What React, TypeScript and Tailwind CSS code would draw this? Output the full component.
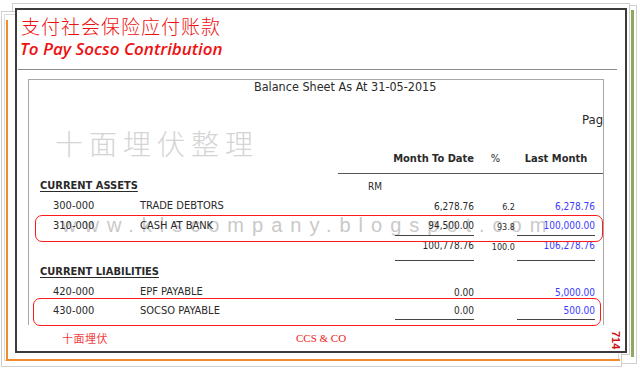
export default function App() {
  const rep = "font-['DejaVu_Sans_Condensed','DejaVu_Sans',sans-serif] text-[#2a2a2a]";
  const blue = "text-[#3b3bff]";
  const num = "flex items-center justify-end text-[10px]";
  const pct = "flex items-center justify-end pr-[2px] pt-[3px] text-[9px]";
  return (
    <div className="relative h-[368px] w-[640px] overflow-hidden bg-white">
      {/* stacked paper sheets behind the main sheet */}
      <div className="absolute left-[20px] top-[5px] h-[359px] w-[617px] border border-[#cfcfcf] bg-white" />
      <div className="absolute left-[631px] top-[10px] h-[347px] w-[3px] bg-[#8fa860]" />
      <div className="absolute left-[12px] top-[3px] h-[352px] w-[618px] border border-[#cfcfcf] bg-white" />
      <div className="absolute left-[1px] top-[11px] h-[356px] w-[621px] border border-[#cfcfcf] bg-white" />
      <div className="absolute left-[4px] top-[14px] h-[347px] w-[615px] border border-[#dadada] bg-white" />
      <div className="absolute left-[6px] top-[20px] h-[341px] w-[614px] border-b-2 border-l-2 border-[#f28c28]" />

      {/* main sheet */}
      <div className="relative ml-[15px] mt-[8px] flex h-[345px] w-[612px] flex-col border-2 border-[#3b3b3b] bg-white">
        <div className="ml-[4px] mt-[4px] h-[24px] font-['Noto_Sans_CJK_SC',sans-serif] text-[19px] font-light leading-[24px] tracking-[1px] text-[#ee1111]">
          支付社会保险应付账款
        </div>
        <div className="ml-[3px] h-[22px] font-['Open_Sans',sans-serif] text-[17px] font-semibold italic leading-[22px] text-[#ee1111]">
          To Pay Socso Contribution
        </div>
        <div className="ml-[1px] mt-[9px] h-px w-[599px] bg-[#8c8c8c]" />

        {/* report box */}
        <div className={`relative z-0 ml-[11px] mt-[9px] flex h-[246px] w-[576px] flex-col border-l border-r border-t border-[#a8a8a8] ${rep}`}>
          <div className="absolute left-[26px] top-[49px] -z-10 font-['Noto_Sans_CJK_SC',sans-serif] text-[28px] font-light leading-[28px] tracking-[6px] text-[#d4d4d4]">
            十面埋伏整理
          </div>
          <div className="absolute left-[33px] top-[133px] -z-10 whitespace-nowrap font-['Liberation_Sans',sans-serif] text-[20px] leading-[24px] tracking-[8px] text-[#c9c9c9]">
            www.klscompany.blogspot.com
          </div>

          <div className="-mt-[2px] h-[18px] pl-[225px] text-[12.5px] leading-[18px]">
            Balance Sheet As At 31-05-2015
          </div>
          <div className="mt-[15px] h-[18px] overflow-hidden whitespace-nowrap pl-[553px] text-[13px] leading-[18px]">
            Page 1
          </div>

          {/* column headers */}
          <div className="ml-[309px] mt-[20px] flex h-[25px] w-[265px] items-start border-b border-[#555555] text-[11px] font-bold">
            <div className="flex h-[20px] w-[136px] items-center justify-end">Month To Date</div>
            <div className="flex h-[20px] w-[43px] items-center justify-center font-normal">%</div>
            <div className="flex h-[20px] w-[78px] items-center justify-center">Last Month</div>
          </div>

          {/* CURRENT ASSETS */}
          <div className="mt-[2px] flex h-[20px] items-center">
            <div className="w-[339px] pl-[11px] text-[11px] font-bold underline underline-offset-2">CURRENT ASSETS</div>
            <div className="text-[10px]">RM</div>
          </div>

          <div className="mt-[1px] flex h-[19px] items-stretch pl-[24px] text-[11px]">
            <div className="flex w-[87px] items-center">300-000</div>
            <div className="flex w-[255px] items-center">TRADE DEBTORS</div>
            <div className={`w-[79px] ${num}`}>6,278.76</div>
            <div className={`w-[43px] ${pct}`}>6.2</div>
            <div className={`w-[78px] ${num} ${blue}`}>6,278.76</div>
          </div>

          <div className="relative flex h-[20px] items-stretch pl-[24px] text-[11px]">
            <div className="absolute left-[6px] top-[-1px] h-[27px] w-[568px] rounded-[7px] border-[1.5px] border-[#ff1a1a]" />
            <div className="flex w-[87px] items-center">310-000</div>
            <div className="flex w-[255px] items-center">CASH AT BANK</div>
            <div className={`w-[79px] border-b border-[#444444] ${num}`}>94,500.00</div>
            <div className={`w-[43px] ${pct}`}>93.8</div>
            <div className={`w-[78px] border-b border-[#444444] ${num} ${blue}`}>100,000.00</div>
          </div>

          <div className="flex h-[25px] items-stretch pl-[366px] text-[11px]">
            <div className={`w-[79px] border-b border-[#444444] pb-[5px] ${num}`}>100,778.76</div>
            <div className={`w-[43px] pb-[5px] ${pct}`}>100.0</div>
            <div className={`w-[78px] border-b border-[#444444] pb-[5px] ${num} ${blue}`}>106,278.76</div>
          </div>

          {/* CURRENT LIABILITIES */}
          <div className="mt-[1px] flex h-[20px] items-center">
            <div className="pl-[11px] text-[11px] font-bold underline underline-offset-2">CURRENT LIABILITIES</div>
          </div>

          <div className="flex h-[20px] items-stretch pl-[24px] text-[11px]">
            <div className="flex w-[87px] items-center">420-000</div>
            <div className="flex w-[255px] items-center">EPF PAYABLE</div>
            <div className={`w-[79px] ${num}`}>0.00</div>
            <div className="w-[43px]" />
            <div className={`w-[78px] ${num} ${blue}`}>5,000.00</div>
          </div>

          <div className="relative flex h-[18px] items-stretch pl-[24px] text-[11px]">
            <div className="absolute left-[4px] top-[-4px] h-[28px] w-[568px] rounded-[7px] border-[1.5px] border-[#ff1a1a]" />
            <div className="flex w-[87px] items-center">430-000</div>
            <div className="flex w-[255px] items-center">SOCSO PAYABLE</div>
            <div className={`w-[79px] border-b border-[#444444] ${num}`}>0.00</div>
            <div className="w-[43px]" />
            <div className={`w-[78px] border-b border-[#444444] ${num} ${blue}`}>500.00</div>
          </div>
        </div>

        {/* footer */}
        <div className="flex h-[26px] items-center">
          <div className="pl-[45px] font-['Noto_Sans_CJK_SC',sans-serif] text-[11px] tracking-[0.5px] text-[#f04040]">十面埋伏</div>
          <div className="ml-[188px] font-['Liberation_Serif',serif] text-[11px] text-[#ee2222]">CCS &amp; CO</div>
          <div className="ml-auto mr-[5px] mt-[4px] font-['Liberation_Sans',sans-serif] text-[11px] font-bold leading-[9px] text-[#cc1111] [writing-mode:vertical-rl]">
            714
          </div>
        </div>
      </div>
    </div>
  );
}
